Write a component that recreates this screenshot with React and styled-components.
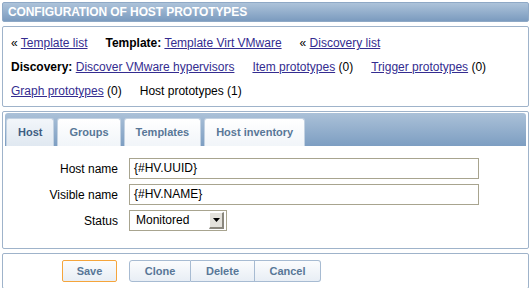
import React from "react";
import styled, { createGlobalStyle } from "styled-components";

const Global = createGlobalStyle`
  html, body { margin: 0; padding: 0; background: #ffffff; }
  body { font-family: "Liberation Sans", Arial, sans-serif; font-size: 12px; color: #000; }
`;

const Page = styled.div`
  padding: 2px 2px 0 2px;
  width: 527px;
  display: flex;
  flex-direction: column;
`;

const Header = styled.div`
  height: 20px;
  box-sizing: border-box;
  background: linear-gradient(#adc3da, #7b9bbf);
  border: 1px solid #8fa9c6;
  border-radius: 2px;
  color: #fff;
  font-weight: bold;
  font-size: 12px;
  letter-spacing: -0.1px;
  line-height: 18px;
  padding-left: 5px;
  text-transform: uppercase;
`;

const Panel = styled.div`
  margin-top: 4px;
  border: 1px solid #9fb3ca;
  border-radius: 2px;
  background: #fff;
  box-sizing: border-box;
`;

const NavPanel = styled(Panel)`
  height: 81px;
  padding: 9px 8px 0 8px;
  display: flex;
  flex-wrap: wrap;
  align-content: flex-start;
  column-gap: 18px;
  row-gap: 9px;
`;

const NavItem = styled.span`
  line-height: 15px;
  font-size: 12px;
  white-space: nowrap;
`;

const Link = styled.a`
  color: #342c90;
  text-decoration: underline;
  cursor: pointer;
`;

const Bold = styled.b`
  font-weight: bold;
`;

const TabsPanel = styled(Panel)`
  height: 138px;
  padding: 1px 2px 2px 2px;
`;

const TabBar = styled.div`
  height: 33px;
  box-sizing: border-box;
  background: linear-gradient(#abc1d8, #7d9ec2);
  border-radius: 3px 3px 0 0;
  display: flex;
  align-items: flex-end;
  gap: 3px;
  padding-left: 1px;
`;

const Tab = styled.div`
  height: 28px;
  box-sizing: border-box;
  padding: 0 11px;
  border: 1px solid #c3d2e2;
  border-bottom: none;
  border-radius: 3px 3px 0 0;
  background: ${(p) => (p.$active ? "linear-gradient(#f2f6fa, #e0e8f1)" : "linear-gradient(#ffffff, #f1f5f9)")};
  color: ${(p) => (p.$active ? "#3d5d82" : "#587797")};
  font-weight: bold;
  font-size: 11px;
  line-height: 26px;
`;

const Form = styled.div`
  padding-top: 12px;
  display: grid;
  grid-template-columns: 113px auto;
  column-gap: 11px;
  row-gap: 5px;
  align-items: center;
`;

const Label = styled.label`
  text-align: right;
  font-size: 12px;
`;

const Input = styled.div`
  width: ${(p) => p.$w}px;
  height: 21px;
  box-sizing: border-box;
  border: 1px solid #a8a48f;
  background: #fff;
  padding-left: 4px;
  font-size: 12px;
  line-height: 19px;
  display: flex;
  align-items: center;
  justify-content: space-between;
`;

const SelectBox = styled(Input)`
  padding-left: 6px;
`;

const Arrow = styled.div`
  width: 15px;
  height: 17px;
  margin-right: 2px;
  box-sizing: border-box;
  background: #e4e2dc;
  border-top: 1px solid #fff;
  border-left: 1px solid #fff;
  border-right: 2px solid #8a877d;
  border-bottom: 2px solid #8a877d;
  display: flex;
  align-items: center;
  justify-content: center;
`;

const ButtonPanel = styled(Panel)`
  height: 36px;
  display: flex;
  align-items: center;
  padding-left: 59px;
  gap: 12px;
`;

const Button = styled.div`
  height: 22px;
  box-sizing: border-box;
  width: ${(p) => p.$w}px;
  border: 1px solid ${(p) => (p.$primary ? "#f5a53c" : "#a7bbd2")};
  border-radius: ${(p) => p.$radius || "2px"};
  background: linear-gradient(#fbfcfd, #e8eef5);
  color: #587797;
  font-weight: bold;
  font-size: 11px;
  text-align: center;
  line-height: 20px;
`;

const Group = styled.div`
  display: flex;
  & > div + div { border-left: none; }
`;

export default function App() {
  return (
    <>
      <Global />
      <Page>
        <Header>Configuration of host prototypes</Header>
        <NavPanel>
          <NavItem>« <Link>Template list</Link></NavItem>
          <NavItem><Bold>Template:</Bold> <Link>Template Virt VMware</Link></NavItem>
          <NavItem>« <Link>Discovery list</Link></NavItem>
          <NavItem><Bold>Discovery:</Bold> <Link>Discover VMware hypervisors</Link></NavItem>
          <NavItem><Link>Item prototypes</Link> (0)</NavItem>
          <NavItem><Link>Trigger prototypes</Link> (0)</NavItem>
          <NavItem><Link>Graph prototypes</Link> (0)</NavItem>
          <NavItem>Host prototypes (1)</NavItem>
        </NavPanel>
        <TabsPanel>
          <TabBar>
            <Tab $active>Host</Tab>
            <Tab>Groups</Tab>
            <Tab>Templates</Tab>
            <Tab>Host inventory</Tab>
          </TabBar>
          <Form>
            <Label>Host name</Label>
            <Input $w={350}>{"{#HV.UUID}"}</Input>
            <Label>Visible name</Label>
            <Input $w={350}>{"{#HV.NAME}"}</Input>
            <Label>Status</Label>
            <SelectBox $w={98}>
              Monitored
              <Arrow>
                <svg width="7" height="4" viewBox="0 0 7 4"><path d="M0 0h7L3.5 4z" fill="#000" /></svg>
              </Arrow>
            </SelectBox>
          </Form>
        </TabsPanel>
        <ButtonPanel>
          <Button $primary $w={55}>Save</Button>
          <Group>
            <Button $w={62} $radius="3px 0 0 3px">Clone</Button>
            <Button $w={64} $radius="0">Delete</Button>
            <Button $w={66} $radius="0 3px 3px 0">Cancel</Button>
          </Group>
        </ButtonPanel>
      </Page>
    </>
  );
}
